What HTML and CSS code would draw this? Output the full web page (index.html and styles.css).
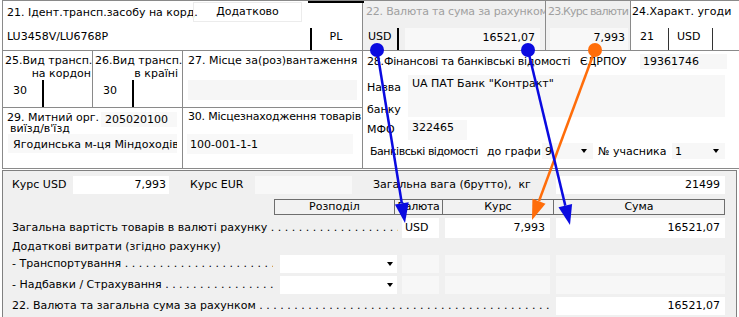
FILE: index.html
```html
<!DOCTYPE html>
<html lang="uk">
  <head>
    <meta charset="utf-8" />
    <title>Декларація - графи 21-30</title>
    <link rel="stylesheet" href="styles.css">
  </head>
  <body>
    <div class="screen">
      <div class="decl">
        <div class="cell c21">
          <div class="row-a">
            <span class="lbl">21. Ідент.трансп.засобу на корд.</span>
            <span class="extra">Додатково</span>
          </div>
          <div class="row-b">
            <span class="val">LU3458V/LU6768P</span>
            <span class="country">PL</span>
          </div>
        </div>

        <div class="cell c22">
          <div class="dim">22. Валюта та сума за рахунком</div>
          <div class="row-b">
            <span class="cur">USD</span>
            <span class="sum">16521,07</span>
          </div>
        </div>

        <div class="cell c23">
          <div class="dim">23.Курс валюти</div>
          <div class="row-b">
            <span class="rate">7,993</span>
          </div>
        </div>

        <div class="cell c24">
          <div class="head">24.Характ. угоди</div>
          <div class="row-b">
            <span class="deal deal-a">21</span>
            <span class="deal deal-b">USD</span>
          </div>
        </div>

        <div class="cell mode c25">
          <div>25.Вид трансп.</div>
          <div class="sub">на кордон</div>
          <div class="fld-mode">30</div>
        </div>

        <div class="cell mode c26">
          <div>26.Вид трансп.</div>
          <div class="sub">в країні</div>
          <div class="fld-mode">30</div>
        </div>

        <div class="cell c27">
          <div>27. Місце за(роз)вантаження</div>
          <div class="place"></div>
        </div>

        <div class="cell c28">
          <div class="bank-head">
            <span class="bank-lbl">28.Фінансові та банківські відомості</span>
            <span class="edrpou">ЄДРПОУ</span>
            <span class="code">19361746</span>
          </div>
          <div class="bank-name">
            <div class="side">
              <div>Назва</div>
              <div>банку</div>
            </div>
            <div class="name-fld">UA ПАТ Банк "Контракт"</div>
          </div>
          <div class="mfo">
            <span class="side">МФО</span>
            <span class="mfo-fld">322465</span>
          </div>
          <div class="bank-info">
            <span class="info-lbl">Банківські відомості</span>
            <span class="to-col">до графи</span>
            <span class="pick pick-col">9</span>
            <span class="member">№ учасника</span>
            <span class="pick pick-member">1</span>
          </div>
        </div>

        <div class="cell c29">
          <div class="office">
            <div class="office-lbl">
              <div>29. Митний орг.</div>
              <div class="office-sub">виїзд/в'їзд</div>
            </div>
            <span class="office-code">205020100</span>
          </div>
          <div class="office-name">Ягодинська м-ця Міндоходів</div>
        </div>

        <div class="cell c30">
          <div class="loc-lbl">30. Місцезнаходження товарів</div>
          <div class="loc-fld">100-001-1-1</div>
        </div>
      </div>

      <div class="calc">
        <div class="rates">
          <span class="rate-lbl">Курс USD</span>
          <span class="box box-usd">7,993</span>
          <span class="rate-lbl eur">Курс EUR</span>
          <span class="box box-eur"></span>
          <span class="weight-lbl">Загальна вага (брутто),  кг</span>
          <span class="box box-weight">21499</span>
        </div>

        <div class="line hdr-line">
          <div class="hdr">
            <span class="h-split">Розподіл</span>
            <span class="h-cur">Валюта</span>
            <span class="h-rate">Курс</span>
            <span class="h-sum">Сума</span>
          </div>
        </div>

        <div class="line total-line">
          <div class="lead lead-total">
            <span class="txt">Загальна вартість товарів в валюті рахунку</span>
            <span class="dots"></span>
          </div>
          <span class="box">USD</span>
          <span class="box num">7,993</span>
          <span class="box num">16521,07</span>
        </div>

        <div class="line extra-line">
          <div class="lead">Додаткові витрати (згідно рахунку)</div>
        </div>

        <div class="line cost-line">
          <div class="lead lead-cost">
            <span class="txt">- Транспортування</span>
            <span class="dots"></span>
          </div>
          <span class="pick pick-split"></span>
          <span class="box empty"></span>
          <span class="box empty"></span>
          <span class="box empty"></span>
        </div>

        <div class="line cost-line gap">
          <div class="lead lead-cost">
            <span class="txt">- Надбавки / Страхування</span>
            <span class="dots"></span>
          </div>
          <span class="pick pick-split"></span>
          <span class="box empty"></span>
          <span class="box empty"></span>
          <span class="box empty"></span>
        </div>

        <div class="line cost-line gap">
          <div class="lead lead-grand">
            <span class="txt">22. Валюта та загальна сума за рахунком</span>
            <span class="dots"></span>
          </div>
          <span class="box num">16521,07</span>
        </div>
      </div>

      <!-- pointers drawn over the form -->
      <svg class="arrows" width="739" height="317" viewBox="0 0 739 317">
        <g fill="#ff6d0a" stroke="#ff6d0a" stroke-width="2.5">
          <line x1="595" y1="50" x2="539" y2="201" />
          <polygon points="532,220 545.5,203.7 532.4,198.8" stroke="none" />
          <circle cx="595" cy="50" r="7" stroke="none" />
        </g>
        <g fill="#0a0ae0" stroke="#0a0ae0" stroke-width="2.5">
          <line x1="377" y1="50" x2="401.8" y2="203.3" />
          <polygon points="405,223 408.7,202.2 394.9,204.4" stroke="none" />
          <circle cx="377" cy="50" r="7" stroke="none" />
          <line x1="528" y1="50" x2="565.3" y2="205.6" />
          <polygon points="570,225 572.1,204 558.5,207.2" stroke="none" />
          <circle cx="528" cy="50" r="7" stroke="none" />
        </g>
      </svg>
    </div>
  </body>
</html>
```

FILE: styles.css
```css
* {
  margin: 0;
  padding: 0;
  box-sizing: border-box;
}

body {
  font-family: "DejaVu Sans", Verdana, sans-serif;
  font-size: 11px;
  line-height: 13px;
  color: #000;
  background: #fff;
}

.screen {
  position: relative;
  width: 739px;
  height: 317px;
  overflow: hidden;
}

/* ---------- declaration boxes 21-30 ---------- */

.decl {
  position: relative;
  display: grid;
  grid-template-columns: 89px 89px 179px 182px 84px 1fr;
  grid-template-rows: 49px 56px 60px;
  gap: 1px;
  width: 737px;
  margin-left: 2px;
  background: #8a8a8a;
  border: 1px solid #8a8a8a;
  border-right: none;
}

/* edge of the control above, scrolled away */
.decl::after {
  content: "";
  position: absolute;
  top: 0;
  left: 305px;
  width: 56px;
  height: 2px;
  background: #000;
}

.cell {
  background: #fff;
  overflow: hidden;
  white-space: nowrap;
}

.row-b {
  display: flex;
  height: 22px;
}

.c21 {
  grid-column: 1 / 4;
  display: flex;
  flex-direction: column;
  justify-content: space-between;
  padding: 1px 2px 0 4px;
}

.row-a {
  display: flex;
  align-items: center;
  height: 20px;
}

.row-a .lbl {
  width: 186px;
}

.extra {
  width: 109px;
  height: 20px;
  border: 1px solid #ececec;
  text-align: center;
  line-height: 18px;
}

.row-b .val {
  flex: 1;
  padding-top: 2px;
}

.country {
  width: 50px;
  padding-top: 2px;
  border-left: 2px solid #000;
  text-align: center;
}

.c22,
.c23,
.c24 {
  display: flex;
  flex-direction: column;
  justify-content: space-between;
  padding-top: 1px;
}

.c22,
.c23 {
  background: #f0f0f0;
}

.dim,
.head {
  height: 20px;
  line-height: 20px;
}

.dim {
  color: #a0a0a0;
  letter-spacing: -0.2px;
}

.c23 .dim {
  letter-spacing: -0.8px;
}

.c22 {
  padding-left: 3px;
}

.cur {
  width: 33px;
  padding: 2px 0 0 2px;
  border-right: 2px solid #000;
}

.sum {
  width: 135px;
  margin-left: 6px;
  padding: 3px 5px 0 0;
  background: #f8f8f8;
  text-align: right;
}

.c23 {
  padding-left: 2px;
}

.rate {
  width: 78px;
  margin-left: 2px;
  padding: 3px 3px 0 0;
  background: #f8f8f8;
  text-align: right;
}

.c24 {
  padding-left: 1px;
}

.deal {
  padding: 2px 0 0 8px;
  border-right: 1px solid #333;
}

.deal-a {
  width: 37px;
}

.deal-b {
  width: 44px;
}

.mode {
  display: flex;
  flex-direction: column;
  padding: 3px 0 0 2px;
}

.mode .sub {
  text-align: right;
  padding-right: 1px;
}

.c26 .sub {
  padding-right: 4px;
}

.fld-mode {
  width: 39px;
  height: 27px;
  margin-top: auto;
  padding: 4px 0 0 8px;
  border-right: 2px solid #000;
}

.c27 {
  padding: 3px 0 0 5px;
}

.place {
  width: 169px;
  height: 20px;
  margin-top: 13px;
  background: #f6f6f6;
}

.c28 {
  grid-column: 4 / 7;
  grid-row: 2 / 4;
  padding: 3px 0 0 4px;
}

.bank-head {
  display: flex;
  height: 15px;
  line-height: 15px;
}

.bank-lbl {
  width: 213px;
  letter-spacing: -0.2px;
}

.edrpou {
  width: 60px;
}

.code {
  width: 87px;
  padding-left: 3px;
  background: #f7f7f7;
}

.bank-name {
  display: flex;
  height: 42px;
  margin-top: 6px;
}

.side {
  width: 41px;
  line-height: 22px;
  padding-top: 2px;
}

.name-fld {
  width: 317px;
  padding: 2px 0 0 4px;
  background: #f7f7f7;
}

.mfo {
  display: flex;
  height: 20px;
  margin-top: 3px;
}

.mfo .side {
  padding-top: 0;
  line-height: 20px;
}

.mfo-fld {
  width: 59px;
  padding: 1px 0 0 4px;
  background: #f7f7f7;
}

.bank-info {
  display: flex;
  align-items: center;
  height: 16px;
  margin-top: 3px;
}

.info-lbl {
  width: 117px;
  margin-left: 3px;
  letter-spacing: -0.5px;
}

.to-col {
  width: 55px;
}

.member {
  width: 74px;
  margin-left: 5px;
}

.pick {
  display: flex;
  align-items: center;
  height: 100%;
  padding-left: 3px;
  background: #f7f7f7;
}

.pick::after {
  content: "";
  margin-left: auto;
  margin-right: 6px;
  border-top: 4px solid #000;
  border-left: 3px solid transparent;
  border-right: 3px solid transparent;
}

.pick-col {
  width: 51px;
}

.pick-member {
  width: 53px;
}

.c29 {
  grid-column: 1 / 3;
  grid-row: 3;
  padding: 4px 0 0 4px;
}

.office {
  display: flex;
}

.office-lbl {
  width: 94px;
  line-height: 11px;
}

.office-sub {
  padding-left: 3px;
}

.office-code {
  width: 76px;
  height: 15px;
  padding: 1px 0 0 4px;
  background: #f8f8f8;
}

.office-name {
  width: 169px;
  height: 19px;
  margin-left: 1px;
  padding: 4px 0 0 5px;
  overflow: hidden;
  background: #f8f8f8;
}

.c30 {
  grid-column: 3;
  grid-row: 3;
  padding: 4px 0 0 5px;
}

.loc-lbl {
  line-height: 10px;
  letter-spacing: -0.2px;
}

.loc-fld {
  width: 166px;
  height: 20px;
  margin: 12px 0 0 -1px;
  padding: 4px 0 0 3px;
  background: #f8f8f8;
}

/* ---------- invoice value calculation ---------- */

.calc {
  width: 735px;
  height: 150px;
  margin: 1px 0 0 2px;
  padding: 5px 0 0 9px;
  background: #f0f0f0;
  border: 1px solid #808080;
  border-bottom: none;
}

.rates {
  display: flex;
  height: 18px;
  line-height: 18px;
}

.rate-lbl {
  width: 61px;
}

.rate-lbl.eur {
  width: 65px;
  margin-left: 21px;
}

.weight-lbl {
  width: 183px;
  margin-left: 21px;
  white-space: pre;
}

.box {
  height: 100%;
  padding: 0 3px;
  background: #fff;
  white-space: nowrap;
}

.box-usd {
  width: 96px;
  text-align: right;
}

.box-eur {
  width: 97px;
  background: #f8f8f8;
}

.box-weight {
  width: 169px;
  padding-right: 5px;
  text-align: right;
}

.line {
  display: grid;
  grid-template-columns: 262px 128px 43px 111px 169px;
  align-items: center;
}

.hdr-line {
  height: 16px;
  margin-top: 5px;
}

.hdr {
  grid-column: 2 / 6;
  display: flex;
  height: 16px;
  border: 1px solid #6e6e6e;
  background: #f2f2f2;
  line-height: 14px;
}

.hdr span {
  text-align: center;
  border-left: 1px solid #6e6e6e;
}

.hdr .h-split {
  width: 119px;
  border-left: none;
}

.hdr .h-cur {
  width: 48px;
  letter-spacing: -0.3px;
}

.hdr .h-rate {
  width: 111px;
}

.hdr .h-sum {
  flex: 1;
}

.total-line {
  height: 20px;
  margin-top: 3px;
  line-height: 20px;
}

.extra-line {
  height: 17px;
}

.cost-line {
  height: 18px;
  line-height: 18px;
}

.cost-line.gap {
  margin-top: 3px;
}

.lead {
  display: flex;
  white-space: nowrap;
}

.lead .dots {
  flex: 1;
  overflow: hidden;
}

.lead .dots::before {
  content: " . . . . . . . . . . . . . . . . . . . . . . . . . . . . . . . . . . . . . . . . . . . . . . . . . . . . . . . . . . . . . . . . . . . . . . . . . . . . . . . . .";
  white-space: pre;
}

.lead-total {
  grid-column: 1 / 3;
  padding-right: 4px;
}

.lead-cost {
  padding-right: 1px;
}

.lead-grand {
  grid-column: 1 / 5;
  padding-right: 4px;
}

.total-line .box:nth-of-type(1) {
  width: 37px;
}

.total-line .box:nth-of-type(2) {
  width: 105px;
}

.box.num {
  text-align: right;
  padding-right: 5px;
}

.cost-line .box {
  width: 100%;
}

.cost-line .box.empty:nth-of-type(2) {
  width: 37px;
}

.cost-line .box.empty:nth-of-type(3) {
  width: 105px;
}

.box.empty {
  background: #f7f7f7;
}

.pick-split {
  width: 117px;
  margin-left: 6px;
  background: #fff;
}

.pick-split::after {
  margin-right: 4px;
}

.arrows {
  position: absolute;
  top: 0;
  left: 0;
  pointer-events: none;
}
```
